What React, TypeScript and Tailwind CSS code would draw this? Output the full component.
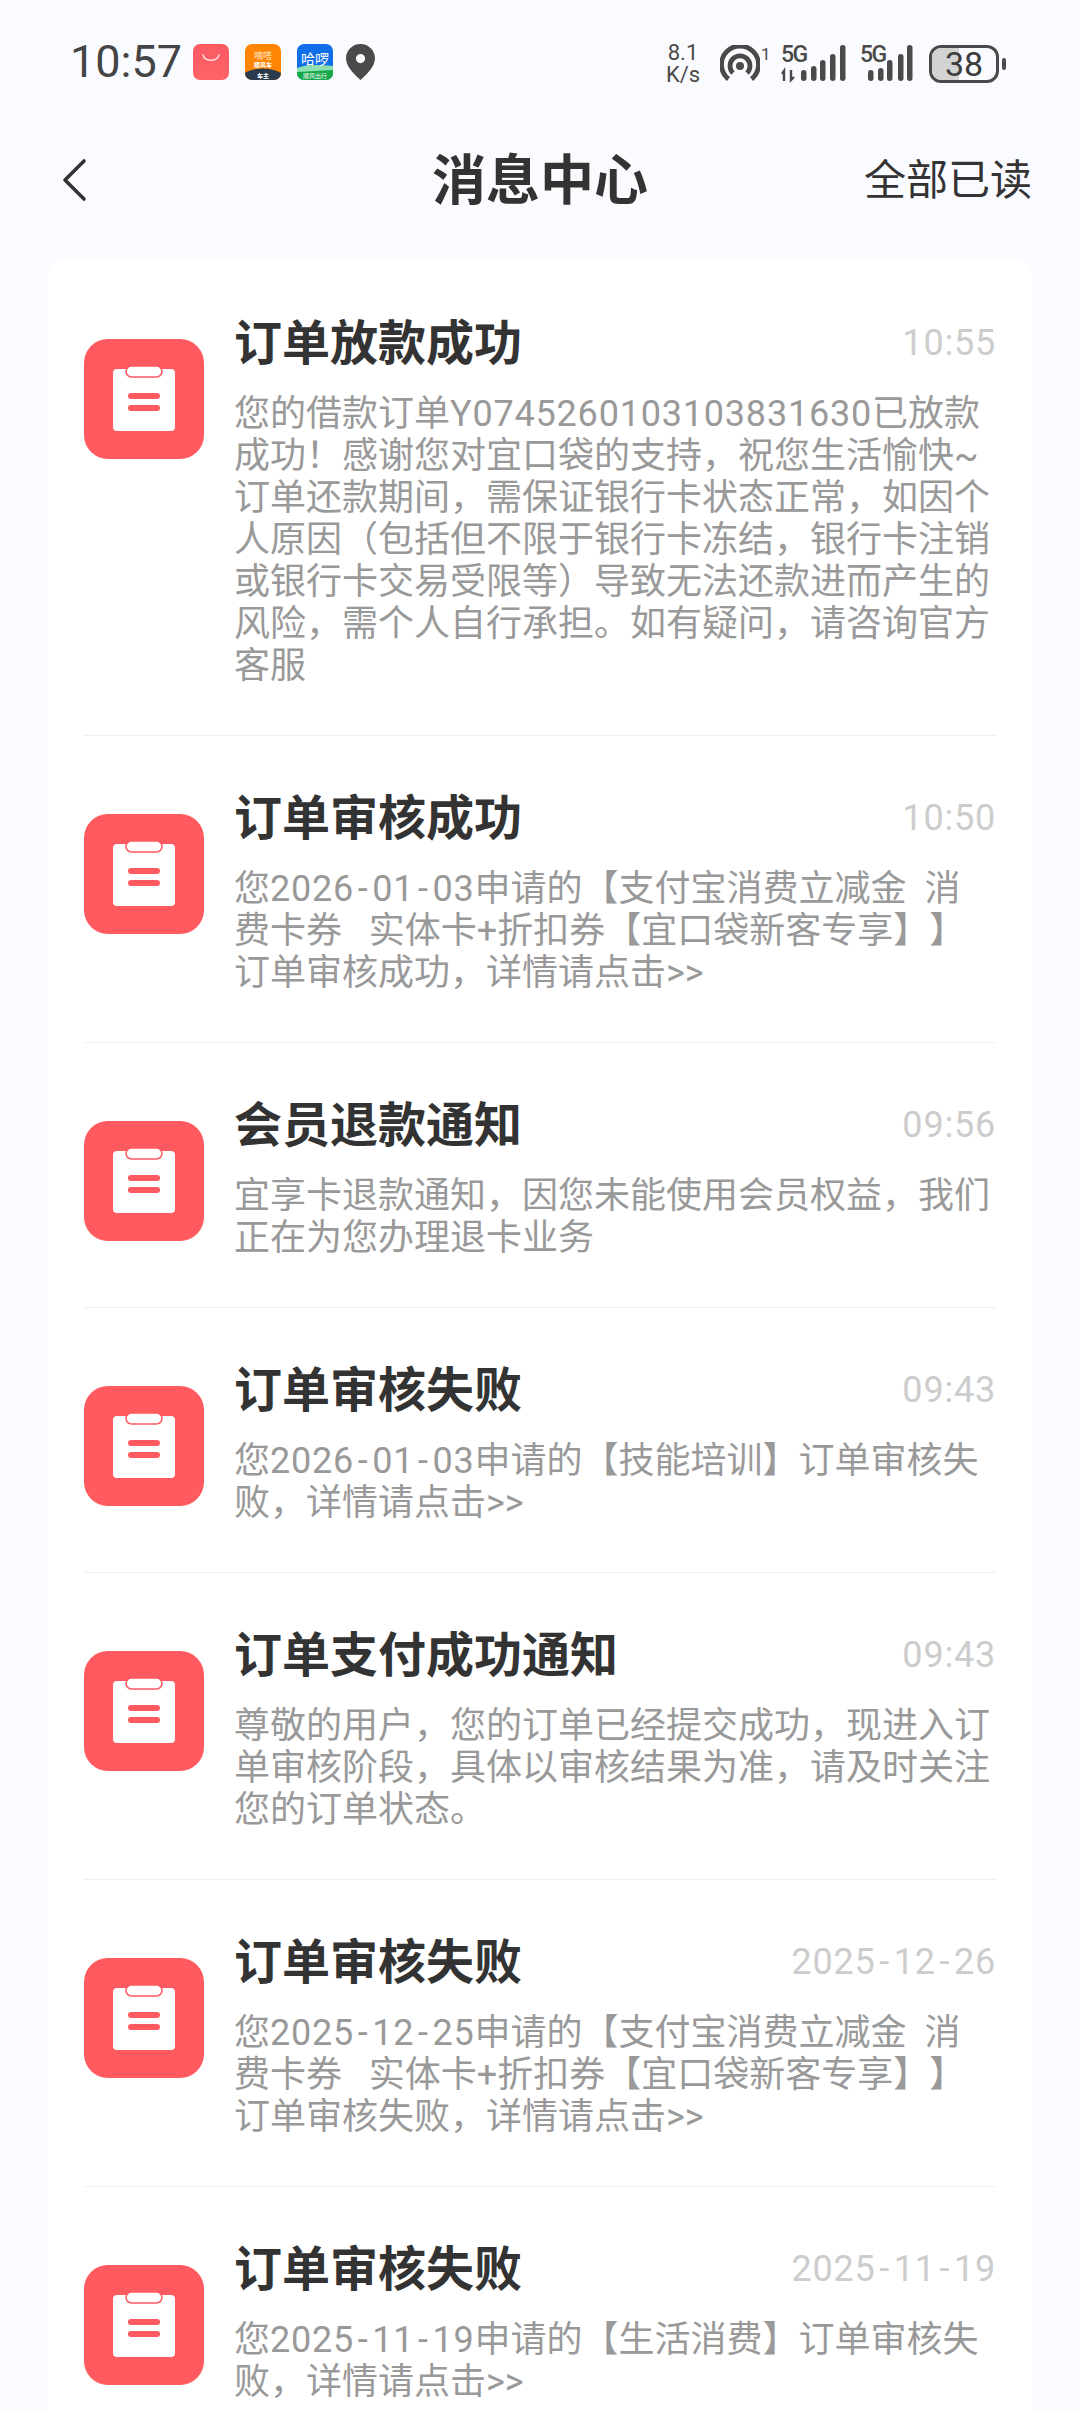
import React from 'react';

interface Message {
  title: string;
  time: string;
  lines: string[];
}

const messages: Message[] = [
  {
    title: '订单放款成功',
    time: '10:55',
    lines: [
      '您的借款订单Y0745260103103831630已放款',
      '成功！感谢您对宜口袋的支持，祝您生活愉快~',
      '订单还款期间，需保证银行卡状态正常，如因个',
      '人原因（包括但不限于银行卡冻结，银行卡注销',
      '或银行卡交易受限等）导致无法还款进而产生的',
      '风险，需个人自行承担。如有疑问，请咨询官方',
      '客服',
    ],
  },
  {
    title: '订单审核成功',
    time: '10:50',
    lines: [
      '您2026-01-03申请的【支付宝消费立减金  消',
      '费卡券   实体卡+折扣券【宜口袋新客专享】】',
      '订单审核成功，详情请点击>>',
    ],
  },
  {
    title: '会员退款通知',
    time: '09:56',
    lines: ['宜享卡退款通知，因您未能使用会员权益，我们', '正在为您办理退卡业务'],
  },
  {
    title: '订单审核失败',
    time: '09:43',
    lines: ['您2026-01-03申请的【技能培训】订单审核失', '败，详情请点击>>'],
  },
  {
    title: '订单支付成功通知',
    time: '09:43',
    lines: [
      '尊敬的用户，您的订单已经提交成功，现进入订',
      '单审核阶段，具体以审核结果为准，请及时关注',
      '您的订单状态。',
    ],
  },
  {
    title: '订单审核失败',
    time: '2025-12-26',
    lines: [
      '您2025-12-25申请的【支付宝消费立减金  消',
      '费卡券   实体卡+折扣券【宜口袋新客专享】】',
      '订单审核失败，详情请点击>>',
    ],
  },
  {
    title: '订单审核失败',
    time: '2025-11-19',
    lines: ['您2025-11-19申请的【生活消费】订单审核失', '败，详情请点击>>'],
  },
];

// digits and ids are a bit wider in the screenshot's font, hyphens much wider
function Digits({ text }: { text: string }) {
  return (
    <span className="tracking-[0.8px]">
      {text.split(/(-)/).map((part, i) =>
        part === '-' ? (
          <span key={i} className="px-[3.7px]">
            -
          </span>
        ) : (
          part
        ),
      )}
    </span>
  );
}

function BodyLine({ text }: { text: string }) {
  const parts = text.split(/([A-Z0-9-]+)/);
  return (
    <div>{parts.map((part, i) => (i % 2 === 1 ? <Digits key={i} text={part} /> : part))}</div>
  );
}

function ClipboardIcon() {
  return (
    <svg className="w-[120px] h-[120px] shrink-0 mt-[30px]" viewBox="0 0 120 120">
      <rect width="120" height="120" rx="24" fill="#ff5a5f" />
      <rect x="29" y="30" width="62" height="62" rx="4" fill="#fff" />
      <rect x="42" y="27" width="36" height="11" rx="5.5" fill="#fff" stroke="#ff5a5f" strokeWidth="1.5" />
      <rect x="44" y="54" width="32" height="6" rx="3" fill="#ff5a5f" />
      <rect x="44" y="66" width="32" height="6" rx="3" fill="#ff5a5f" />
    </svg>
  );
}

function AppIcons() {
  return (
    <div className="flex items-center ml-[11px]">
      <svg className="w-9 h-9" viewBox="0 0 36 36">
        <defs>
          <linearGradient id="bag" x1="0" y1="0" x2="0" y2="1">
            <stop offset="0" stopColor="#fb5a61" />
            <stop offset="1" stopColor="#ff636a" />
          </linearGradient>
        </defs>
        <rect width="36" height="36" rx="7" fill="url(#bag)" />
        <path d="M10 11c2 7 14 7 16 0" fill="none" stroke="#ffd9d6" strokeWidth="1.6" strokeLinecap="round" />
      </svg>
      <svg className="w-9 h-9 ml-4" viewBox="0 0 36 36">
        <clipPath id="ddclip">
          <rect width="36" height="36" rx="7" />
        </clipPath>
        <g clipPath="url(#ddclip)">
          <rect width="36" height="36" fill="#ff8505" />
          <path d="M0 29c10-6 26-6 36 0v7H0z" fill="#2a3a4d" />
          <text x="18" y="15" textAnchor="middle" fontSize="9" fill="#ffe9c8" fontFamily="'Noto Sans CJK SC',sans-serif">嘀嗒</text>
          <text x="18" y="23" textAnchor="middle" fontSize="6" fontWeight="700" fill="#fff" fontFamily="'Noto Sans CJK SC',sans-serif">顺风车</text>
          <text x="18" y="33.5" textAnchor="middle" fontSize="6" fontWeight="700" fill="#fff" fontFamily="'Noto Sans CJK SC',sans-serif">车主</text>
        </g>
      </svg>
      <svg className="w-9 h-9 ml-4" viewBox="0 0 36 36">
        <clipPath id="hlclip">
          <rect width="36" height="36" rx="7" />
        </clipPath>
        <g clipPath="url(#hlclip)">
          <rect width="36" height="36" fill="#0f6ee8" />
          <path d="M0 24c12-4 24-3 36-2v14H0z" fill="#8ee0b0" />
          <path d="M0 28c12-1 24-1 36-2v10H0z" fill="#17a64a" />
          <text x="18" y="20" textAnchor="middle" fontSize="14" fill="#fff" fontFamily="'Noto Sans CJK SC',sans-serif">哈啰</text>
          <text x="18" y="34" textAnchor="middle" fontSize="6" fill="#fff" fontFamily="'Noto Sans CJK SC',sans-serif">顺风出行</text>
        </g>
      </svg>
      <svg className="w-[29px] h-9 ml-[13px]" viewBox="0 0 29 36">
        <path
          fillRule="evenodd"
          d="M14.5 0C6.5 0 0 6.3 0 14.2 0 23 9 31 14.5 36 20 31 29 23 29 14.2 29 6.3 22.5 0 14.5 0zm0 10a4.6 4.6 0 1 1 0 9.2 4.6 4.6 0 0 1 0-9.2z"
          fill="#4a4a4a"
        />
      </svg>
    </div>
  );
}

function Signal({ bars, arrows }: { bars: number[][]; arrows?: boolean }) {
  const width = bars[bars.length - 1][0] + 6;
  return (
    <div className="relative h-[38px]" style={{ width }}>
      <span className="absolute left-0 top-0 font-['Roboto',sans-serif] font-medium text-[23px] leading-[19px] tracking-[-1.5px] text-[#4a4a4a]">
        5G
      </span>
      <svg className="absolute inset-0" style={{ width, height: 38 }} viewBox={`0 0 ${width} 38`}>
        {arrows && <path d="M3 36V26l-2 3M3 26v10M10 25v10l3-3" fill="none" stroke="#4a4a4a" strokeWidth="2.4" />}
        {bars.map(([x, top]) => (
          <rect key={x} x={x} y={top} width="5.5" height={36 - top} rx="2.75" fill="#4a4a4a" />
        ))}
      </svg>
    </div>
  );
}

function StatusRight() {
  return (
    <div className="flex items-center">
      <div className="w-[38px] flex flex-col items-center font-['Roboto',sans-serif] text-[#4a4a4a] text-[22px] leading-[22px]">
        <span>8.1</span>
        <span>K/s</span>
      </div>
      <div className="relative w-[50px] h-[38px] ml-[18px]">
        <svg className="w-[40px] h-[38px]" viewBox="0 0 40 38">
          <g fill="none" stroke="#4a4a4a" strokeWidth="4.8" strokeLinecap="butt">
            <path d="M8.5 34A18.5 18.5 0 1 1 31.5 34" />
            <path d="M13 28A10 10 0 1 1 27 28" />
          </g>
          <circle cx="20" cy="21" r="4" fill="#4a4a4a" />
        </svg>
        <span className="absolute left-[41px] top-0 font-['Roboto',sans-serif] text-[17px] leading-[18px] text-[#4a4a4a]">1</span>
      </div>
      <div className="ml-[11px]">
        <Signal arrows bars={[[20, 25], [30, 21], [39, 15], [49, 9], [59, 0]]} />
      </div>
      <div className="ml-[14px]">
        <Signal bars={[[8, 25], [18, 23], [27, 15], [38, 9], [47, 0]]} />
      </div>
      <div className="relative ml-[16px] w-[70px] h-[38px] rounded-[12px] border-[3px] border-[#4a4a4a] overflow-hidden flex items-center justify-center">
        <div className="absolute left-0 top-0 bottom-0 w-[27px] bg-[#d3d3d3]" />
        <span className="relative font-['Roboto',sans-serif] text-[#3c3c3c] text-[34px] leading-none">38</span>
      </div>
      <div className="w-1 h-3 rounded-full bg-[#4a4a4a] ml-[3px]" />
    </div>
  );
}

export default function App() {
  return (
    <div className="w-[1080px] h-[2412px] overflow-hidden bg-[#fafbff]">
      <div className="h-[120px] pt-[42px] pl-[70px] pr-[74px] flex items-start justify-between">
        <div className="flex items-center h-10">
          <span className="font-['Roboto',sans-serif] text-[45px] leading-10 text-[#444]">10:57</span>
          <AppIcons />
        </div>
        <StatusRight />
      </div>

      <div className="h-[120px] px-[48px] grid grid-cols-3 items-center">
        <svg className="w-7 h-[46px] ml-[12px]" viewBox="0 0 28 46" fill="none" stroke="#333" strokeWidth="3.6" strokeLinecap="round" strokeLinejoin="round">
          <path d="M24 4 5 23l19 19" />
        </svg>
        <div className="pb-[6px] text-center font-['Noto_Sans_CJK_SC',sans-serif] font-bold text-[54px] leading-none text-[#333]">
          消息中心
        </div>
        <div className="pb-[6px] text-right font-['Noto_Sans_CJK_SC',sans-serif] text-[42px] leading-none text-[#333]">
          全部已读
        </div>
      </div>

      <div className="mt-5 mx-[48px] px-[36px] pt-px bg-white rounded-[16px]">
        {messages.map((m, i) => (
          <div key={i} className="flex gap-[30px] pt-[48px] pb-[48px] border-b border-[#f0f0f0]">
            <ClipboardIcon />
            <div className="flex-1 min-w-0">
              <div className="flex items-center justify-between h-[66px]">
                <span className="mb-[7px] font-['Noto_Sans_CJK_SC',sans-serif] font-bold text-[48px] leading-none text-[#333]">
                  {m.title}
                </span>
                <span className="mt-[2px] font-['Roboto',sans-serif] text-[36px] leading-none text-[#cccccc]">
                  <Digits text={m.time} />
                </span>
              </div>
              <div className="mt-[18px] font-['Roboto','Noto_Sans_CJK_SC',sans-serif] [text-spacing-trim:space-all] text-[36px] leading-[42px] text-[#999999] whitespace-pre">
                {m.lines.map((line, j) => (
                  <BodyLine key={j} text={line} />
                ))}
              </div>
            </div>
          </div>
        ))}
      </div>
    </div>
  );
}
